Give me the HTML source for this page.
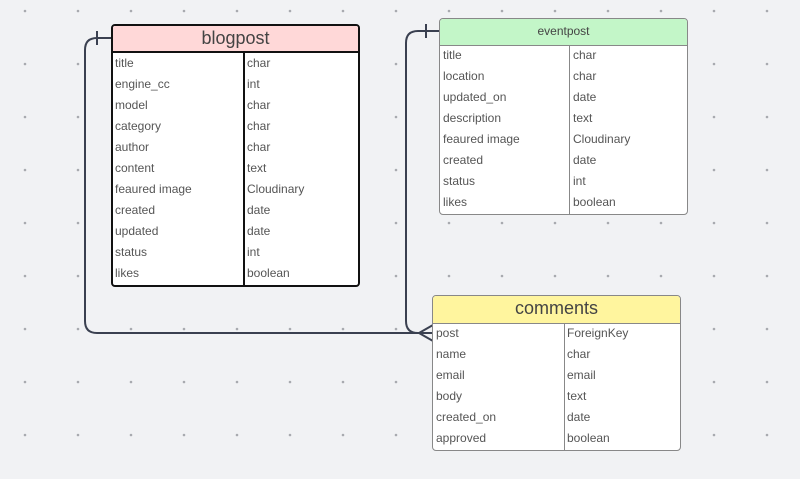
<!DOCTYPE html>
<html><head><style>
body{margin:0;width:800px;height:479px;overflow:hidden;background:#f1f2f4;font-family:"Liberation Sans",sans-serif;position:relative}
.t{position:absolute;background:#fff;box-sizing:border-box;overflow:hidden}
.h{text-align:center;color:#444;box-sizing:border-box}
.r{position:absolute;font-size:12px;color:#555;line-height:21px}
.d{position:absolute;top:0;bottom:0;width:0}
svg{position:absolute;left:0;top:0}
</style></head><body>
<svg width="800" height="479">
<defs><pattern id="p" x="0" y="0" width="53" height="53" patternUnits="userSpaceOnUse"><circle cx="25" cy="11" r="1.3" fill="#a8aaaf"/></pattern></defs>
<rect width="800" height="479" fill="url(#p)"/>
<g fill="none" stroke="#3a4050" stroke-width="2">
<path d="M112 38 H97 Q85 38 85 50 V321 Q85 333 97 333 H433"/>
<path d="M97 31 V45"/>
<path d="M439 31 H418 Q406 31 406 43 V321 Q406 333 418 333 H433"/>
<path d="M426 24 V38"/>
<path d="M433 325 L419 333 L433 341"/>
</g>
</svg>

<div class="t" style="left:111px;top:24px;width:249px;height:263px;border:2px solid #111;border-radius:4px">
<div class="h" style="height:27px;background:#ffd8d8;border-bottom:2px solid #111;font-size:18px;line-height:24px">blogpost</div>
<div class="d" style="left:130px;top:27px;border-left:2px solid #111"></div>
<div class="r" style="left:2px;top:27px">title<br>engine_cc<br>model<br>category<br>author<br>content<br>feaured image<br>created<br>updated<br>status<br>likes</div>
<div class="r" style="left:134px;top:27px">char<br>int<br>char<br>char<br>char<br>text<br>Cloudinary<br>date<br>date<br>int<br>boolean</div>
</div>

<div class="t" style="left:439px;top:18px;width:249px;height:197px;border:1px solid #888;border-radius:4px">
<div class="h" style="height:27px;background:#c3f6c8;border-bottom:1px solid #888;font-size:12px;line-height:25px">eventpost</div>
<div class="d" style="left:129px;top:27px;border-left:1px solid #888"></div>
<div class="r" style="left:3px;top:26px">title<br>location<br>updated_on<br>description<br>feaured image<br>created<br>status<br>likes</div>
<div class="r" style="left:133px;top:26px">char<br>char<br>date<br>text<br>Cloudinary<br>date<br>int<br>boolean</div>
</div>

<div class="t" style="left:432px;top:295px;width:249px;height:156px;border:1px solid #888;border-radius:4px">
<div class="h" style="height:28px;background:#fff59e;border-bottom:1px solid #888;font-size:18px;line-height:25px">comments</div>
<div class="d" style="left:131px;top:28px;border-left:1px solid #888"></div>
<div class="r" style="left:3px;top:27px">post<br>name<br>email<br>body<br>created_on<br>approved</div>
<div class="r" style="left:134px;top:27px">ForeignKey<br>char<br>email<br>text<br>date<br>boolean</div>
</div>
</body></html>
